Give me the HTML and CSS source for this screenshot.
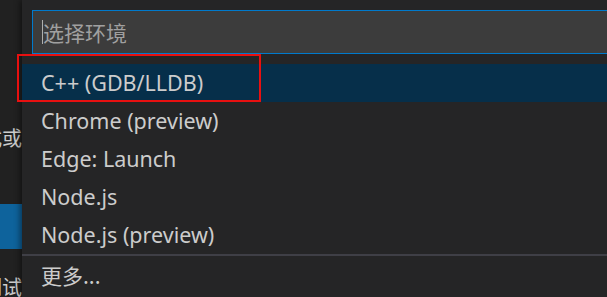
FILE: index.html
```html
<!DOCTYPE html>
<html lang="zh-CN">
<head>
    <meta charset="UTF-8">
    <title>选择环境</title>
    <link rel="stylesheet" href="styles.css">
</head>
<body>

<div class="page">
    <div class="sidebar">
        <div class="side-text side-text-top">式或</div>
        <div class="side-button"></div>
        <div class="side-text side-text-bottom">调试</div>
    </div>

    <div class="quick-pick">
        <div class="input-row">
            <div class="input-box">
                <span class="caret"></span>
                <span class="placeholder">选择环境</span>
            </div>
        </div>
        <ul class="pick-list">
            <li class="pick-item selected">C++ (GDB/LLDB)</li>
            <li class="pick-item">Chrome (preview)</li>
            <li class="pick-item">Edge: Launch</li>
            <li class="pick-item">Node.js</li>
            <li class="pick-item">Node.js (preview)</li>
            <li class="pick-item more">更多...</li>
        </ul>
    </div>

    <!-- annotation box from the screenshot -->
    <div class="highlight-box"></div>
</div>

</body>
</html>
```

FILE: styles.css
```css
html, body {
    margin: 0;
    padding: 0;
    height: 100%;
    overflow: hidden;
}
body {
    background-color: #212121;
    font-family: "Noto Sans", "Noto Sans CJK SC", sans-serif;
    color: #cccccc;
}
.page {
    position: relative;
    display: flex;
    height: 297px;
}
.sidebar {
    width: 22px;
    flex-shrink: 0;
    overflow: hidden;
    background-color: #212121;
}
.side-text {
    font-family: "Noto Sans CJK SC", sans-serif;
    font-size: 20px;
    line-height: 22px;
    white-space: nowrap;
    margin-left: -18px;
    color: #cccccc;
}
.side-text-top {
    margin-top: 127px;
}
.side-button {
    margin-top: 55px;
    height: 45px;
    background-color: #0e639c;
}
.side-text-bottom {
    margin-top: 27px;
}
.quick-pick {
    flex: 1;
    background-color: #252526;
    box-shadow: -2px 0 6px rgba(0, 0, 0, 0.45);
}
.input-row {
    padding: 10px 0 10px 10px;
}
.input-box {
    height: 42px;
    display: flex;
    align-items: center;
    background-color: #3c3c3c;
    border: 1px solid #007acc;
    border-right: none;
    padding-left: 9px;
}
.caret {
    width: 1px;
    height: 24px;
    background-color: #aeafad;
}
.placeholder {
    font-family: "Noto Sans CJK SC", sans-serif;
    font-size: 21px;
    color: #a0a0a0;
}
.pick-list {
    list-style: none;
    margin: 0;
    padding: 0;
}
.pick-item {
    height: 38px;
    line-height: 38px;
    padding-left: 19px;
    font-size: 21.5px;
    white-space: nowrap;
}
.pick-item.selected {
    background-color: #062f4a;
}
.pick-item.more {
    border-top: 2px solid #3f3f46;
    font-family: "Noto Sans CJK SC", sans-serif;
    font-size: 21px;
}
.highlight-box {
    position: absolute;
    left: 17px;
    top: 54px;
    width: 240px;
    height: 44px;
    border: 2px solid #e81010;
}
```
